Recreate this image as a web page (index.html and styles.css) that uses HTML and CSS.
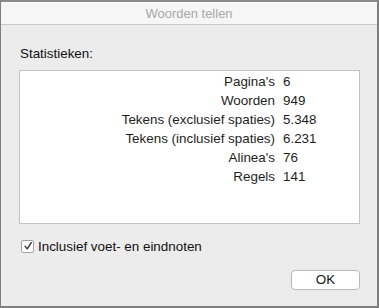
FILE: index.html
```html
<!DOCTYPE html>
<html lang="nl">
<head>
<meta charset="utf-8">
<title>Woorden tellen</title>
<link rel="stylesheet" href="styles.css">
</head>
<body>
<div class="window">
  <div class="titlebar">Woorden tellen</div>
  <div class="content">
    <div class="heading">Statistieken:</div>
    <div class="stats">
      <div class="grid">
        <span class="label">Pagina's</span><span class="value">6</span>
        <span class="label">Woorden</span><span class="value">949</span>
        <span class="label">Tekens (exclusief spaties)</span><span class="value">5.348</span>
        <span class="label">Tekens (inclusief spaties)</span><span class="value">6.231</span>
        <span class="label">Alinea's</span><span class="value">76</span>
        <span class="label">Regels</span><span class="value">141</span>
      </div>
    </div>
    <label class="check">
      <span class="box"><svg width="10" height="10" viewBox="0 0 10 10"><path d="M2 5.2 L4.2 7.8 L8.3 1.6" fill="none" stroke="#2a2a2a" stroke-width="1.3" stroke-linecap="round" stroke-linejoin="round"/></svg></span>
      <span class="check-text">Inclusief voet- en eindnoten</span>
    </label>
    <div class="actions">
      <button class="btn">OK</button>
    </div>
  </div>
</div>
</body>
</html>
```
FILE: styles.css
```css
html, body {
  margin: 0;
  padding: 0;
  background: #ececec;
}
body {
  font-family: "Liberation Sans", Arial, sans-serif;
  color: #1c1c1c;
}
.window {
  width: 379px;
  height: 308px;
  box-sizing: border-box;
  border-top: 2px solid #8a8a8a;
  border-left: 1px solid #7e7e7e;
  border-right: 2px solid #7e7e7e;
  border-bottom: 2px solid #7e7e7e;
  background: #ececec;
  display: flex;
  flex-direction: column;
}
.titlebar {
  height: 23px;
  box-sizing: border-box;
  border-top: 1px solid #fdfdfd;
  border-bottom: 1px solid #c8c8c8;
  background: #f6f6f6;
  text-align: center;
  font-size: 13px;
  line-height: 22px;
  color: #a8a8a8;
}
.content {
  flex: 1;
  padding: 21px 17px 16px 18px;
  display: flex;
  flex-direction: column;
}
.heading {
  font-size: 13.4px;
  line-height: 16px;
  color: #111;
  padding-left: 1px;
}
.stats {
  margin-top: 8px;
  height: 154px;
  box-sizing: border-box;
  background: #fff;
  border: 1px solid #c3c3c3;
  padding-top: 1px;
}
.grid {
  display: grid;
  grid-template-columns: 255px auto;
  column-gap: 8px;
  font-size: 13.4px;
  line-height: 19px;
  color: #1e1e1e;
}
.label {
  text-align: right;
}
.check {
  margin-top: 14px;
  display: flex;
  align-items: center;
  height: 16px;
  padding-left: 2px;
}
.box {
  width: 11px;
  height: 11px;
  border: 1px solid #a3a3a3;
  border-radius: 2px;
  background: #fff;
  display: flex;
  align-items: center;
  justify-content: center;
}
.check-text {
  margin-left: 4px;
  font-size: 13.4px;
  color: #111;
}
.actions {
  margin-top: 16px;
  display: flex;
  justify-content: flex-end;
}
.btn {
  width: 69px;
  height: 20px;
  background: #fff;
  border: 1px solid #b8b8b8;
  border-radius: 4px;
  font-family: "Liberation Sans", Arial, sans-serif;
  font-size: 13.4px;
  color: #111;
  padding: 0;
  line-height: 18px;
}
```
